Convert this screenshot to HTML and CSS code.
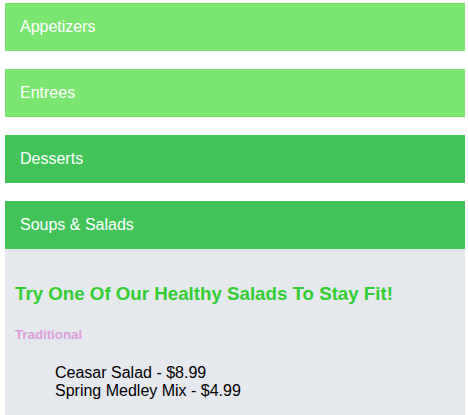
FILE: index.html
```html
<!DOCTYPE html>
<html>
<head>
<meta charset="utf-8">
<link rel="stylesheet" href="styles.css">
</head>
<body>
<div class="menu">
  <div class="tab tab-light">Appetizers</div>
  <div class="tab tab-light">Entrees</div>
  <div class="tab tab-dark">Desserts</div>
  <div class="tab tab-dark">Soups &amp; Salads</div>
  <div class="panel">
    <h3 class="panel-title">Try One Of Our Healthy Salads To Stay Fit!</h3>
    <h5 class="panel-sub">Traditional</h5>
    <ul class="items">
      <li>Ceasar Salad - $8.99</li>
      <li>Spring Medley Mix - $4.99</li>
    </ul>
  </div>
</div>
</body>
</html>
```

FILE: styles.css
```css
html, body {
  margin: 0;
  padding: 0;
  background: #ffffff;
}
body {
  font-family: "Liberation Sans", Arial, Helvetica, sans-serif;
  padding: 3px 3px 0 5px;
}
.menu {
  width: 460px;
  display: flex;
  flex-direction: column;
}
.tab {
  height: 48px;
  display: flex;
  align-items: center;
  padding-left: 15px;
  color: #ffffff;
  font-size: 16px;
  box-sizing: border-box;
  margin-bottom: 18px;
}
.tab-light {
  background: #7ae571;
}
.tab-dark {
  background: #41c35a;
}
.menu .tab:nth-child(4) {
  margin-bottom: 0;
}
.panel {
  background: #e5e8ed;
  padding: 16px 10px 20px 10px;
}
.panel-title {
  color: #32cd32;
  font-size: 18.72px;
  font-weight: bold;
  margin: 18px 0 18px 0;
}
.panel-sub {
  color: #dda0dd;
  font-size: 13.28px;
  font-weight: bold;
  margin: 22px 0 22px 0;
}
.items {
  list-style: none;
  margin: 0;
  padding-left: 40px;
  font-size: 16px;
  color: #000000;
}
```
